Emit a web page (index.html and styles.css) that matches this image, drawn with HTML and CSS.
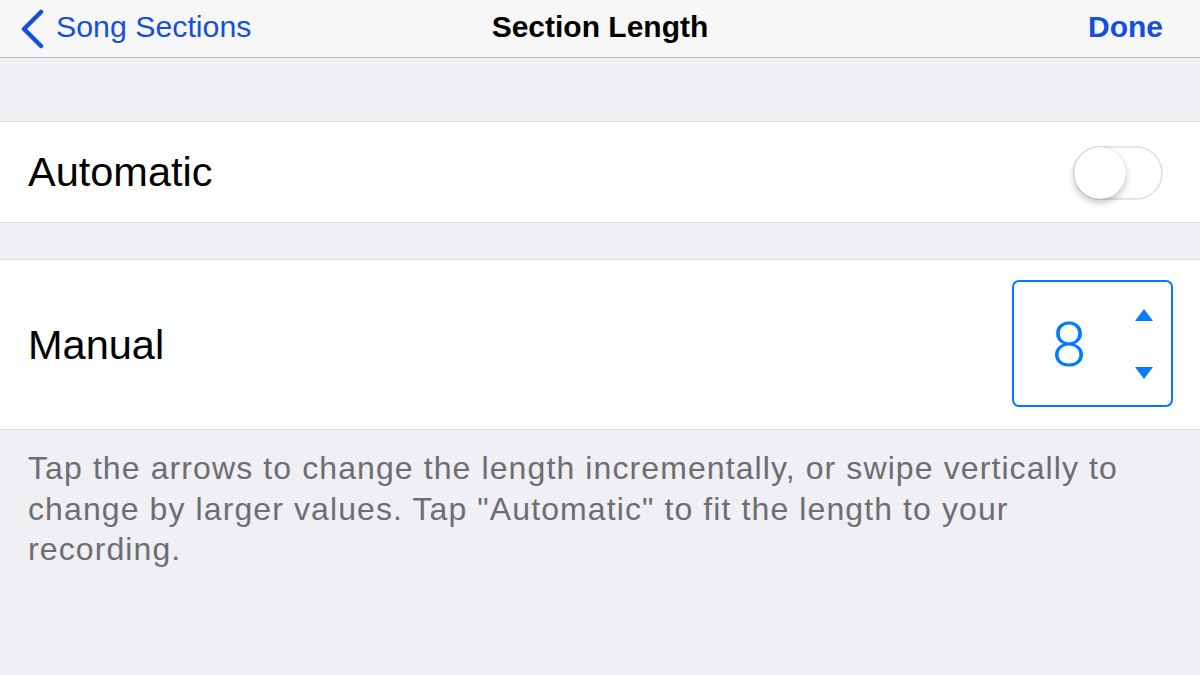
FILE: index.html
```html
<!DOCTYPE html>
<html>
<head>
<meta charset="utf-8">
<link rel="stylesheet" href="styles.css">
</head>
<body>
<div class="screen">
  <header class="navbar">
    <div class="nav-left">
      <svg class="chevron" width="26" height="40" viewBox="0 0 26 40"><path d="M22 3 L5 20 L22 37" fill="none" stroke="#1450dc" stroke-width="4.5" stroke-linecap="round" stroke-linejoin="round"/></svg>
      <span class="nav-link">Song Sections</span>
    </div>
    <div class="nav-title">Section Length</div>
    <div class="nav-right"><span class="nav-done">Done</span></div>
  </header>

  <section class="group group-first">
    <div class="cell cell-auto">
      <span class="cell-label">Automatic</span>
      <div class="toggle"><div class="knob"></div></div>
    </div>
  </section>

  <section class="group group-second">
    <div class="cell cell-manual">
      <span class="cell-label">Manual</span>
      <div class="stepper">
        <span class="stepper-value">8</span>
        <div class="stepper-arrows">
          <span class="arrow arrow-up"></span>
          <span class="arrow arrow-down"></span>
        </div>
      </div>
    </div>
  </section>

  <p class="footer-text">Tap the arrows to change the length incrementally, or swipe vertically to change by larger values. Tap "Automatic" to fit the length to your recording.</p>
</div>
</body>
</html>
```

FILE: styles.css
```css
html, body {
  margin: 0;
  padding: 0;
}
body {
  width: 1200px;
  height: 675px;
  overflow: hidden;
  background: #efeff4;
  font-family: "Liberation Sans", Arial, sans-serif;
}
.screen {
  display: flex;
  flex-direction: column;
}
.navbar {
  height: 54px;
  background: #f7f7f7;
  border-bottom: 1px solid #b8b8bc;
  display: grid;
  grid-template-columns: 1fr auto 1fr;
  align-items: center;
  padding-bottom: 3px;
}
.nav-left {
  display: flex;
  align-items: center;
  padding-left: 19px;
}
.chevron {
  display: block;
  margin-top: 3px;
}
.nav-link {
  font-size: 30.3px;
  color: #1450dc;
  margin-left: 11px;
}
.nav-title {
  font-size: 30px;
  font-weight: bold;
  color: #000;
}
.nav-right {
  display: flex;
  justify-content: flex-end;
  padding-right: 37px;
}
.nav-done {
  font-size: 30px;
  font-weight: bold;
  color: #1450dc;
}
.group {
  background: #fff;
  border-top: 1px solid #dcdce0;
  border-bottom: 1px solid #dcdce0;
}
.group-first {
  margin-top: 63px;
}
.group-second {
  margin-top: 36px;
}
.cell {
  display: flex;
  align-items: center;
  justify-content: space-between;
  padding-left: 28px;
}
.cell-auto {
  height: 100px;
  padding-right: 37px;
}
.cell-manual {
  height: 169px;
  padding-right: 27px;
}
.cell-label {
  font-size: 41.5px;
  color: #000;
}
.toggle {
  width: 86px;
  height: 50px;
  border: 2px solid #e4e4e6;
  border-radius: 28px;
  background: #fff;
  position: relative;
  margin-top: 1px;
}
.knob {
  position: absolute;
  left: -1px;
  top: -1px;
  width: 52px;
  height: 52px;
  border-radius: 50%;
  background: #fff;
  box-shadow: 0 4px 7px rgba(0,0,0,0.22), 0 0 1px rgba(0,0,0,0.25);
}
.stepper {
  width: 157px;
  height: 123px;
  border: 2px solid #007aff;
  border-radius: 7px;
  display: flex;
  align-items: center;
  margin-top: -2px;
}
.stepper-value {
  width: 110px;
  text-align: center;
  font-family: Roboto, "Liberation Sans", sans-serif;
  font-weight: 300;
  font-size: 62px;
  color: #007aff;
  line-height: 1;
  margin-top: 2px;
}
.stepper-arrows {
  width: 40px;
  height: 70px;
  display: flex;
  flex-direction: column;
  justify-content: space-between;
  align-items: center;
  margin-top: 0;
}
.arrow {
  width: 0;
  height: 0;
  border-left: 9px solid transparent;
  border-right: 9px solid transparent;
}
.arrow-up {
  border-bottom: 12px solid #007aff;
}
.arrow-down {
  border-top: 12px solid #007aff;
}
.footer-text {
  margin: 0;
  padding: 18px 62px 0 28px;
  font-size: 32px;
  letter-spacing: 1.1px;
  line-height: 40.5px;
  color: #6d6d72;
}
```
